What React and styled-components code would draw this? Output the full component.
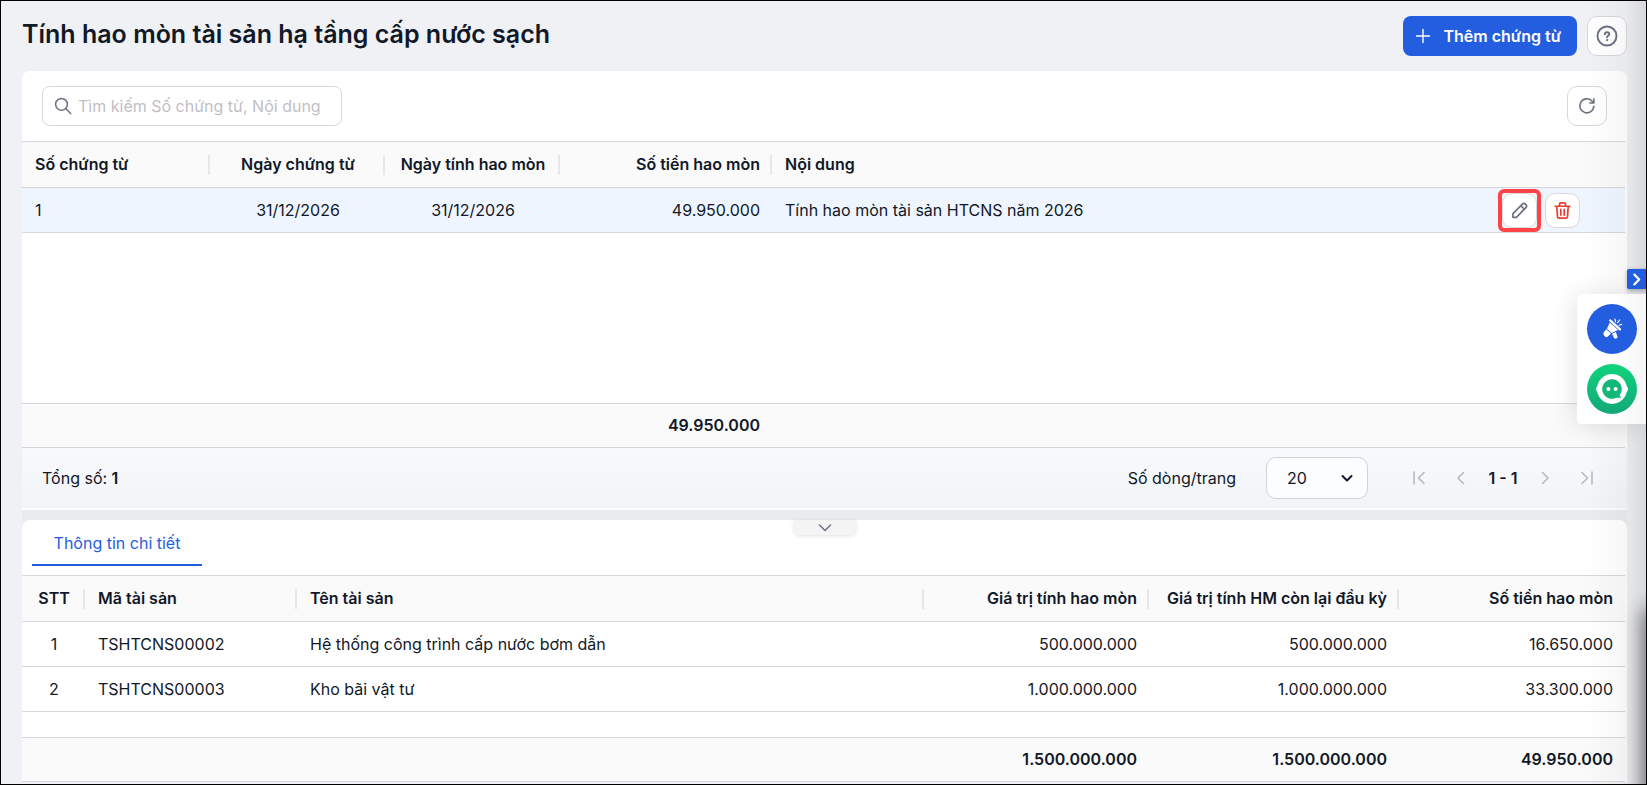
import React from "react";
import styled, { createGlobalStyle } from "styled-components";

const GlobalStyle = createGlobalStyle`
  *, *::before, *::after { box-sizing: border-box; }
  html, body { margin: 0; }
  body, button, input, select {
    font-family: Inter, "Noto Sans", sans-serif;
    font-size: 16px;
    line-height: 24px;
    color: #111827;
  }
`;

const Page = styled.div`
  position: relative;
  min-height: 100vh;
  padding: 15px 19px 2px 21px;
  border: 1px solid #000;
  background: #f0f1f4;
  overflow: hidden;
`;

const EdgeShade = styled.div`
  position: absolute;
  inset: 0 0 0 auto;
  width: 60px;
  background: linear-gradient(to right, rgba(0, 0, 0, 0), rgba(0, 0, 0, 0.03) 66%, rgba(0, 0, 0, 0.1));
  pointer-events: none;
`;

const CornerShade = styled.div`
  position: absolute;
  right: -12px;
  top: 610px;
  bottom: -30px;
  width: 12px;
  box-shadow: 0 0 20px 2px rgba(0, 0, 0, 0.6);
  pointer-events: none;
`;

const Header = styled.header`
  display: flex;
  align-items: center;
  justify-content: space-between;
  margin-bottom: 15px;
`;

const Title = styled.h1`
  margin: 0;
  padding-bottom: 4px;
  font-size: 25px;
  line-height: 32px;
  font-weight: 600;
`;

const Actions = styled.div`
  display: flex;
  gap: 10px;
`;

const PrimaryButton = styled.button`
  display: flex;
  align-items: center;
  gap: 12px;
  height: 40px;
  padding: 0 16px 0 12px;
  border: 0;
  border-radius: 8px;
  background: #245ee0;
  color: #fff;
  font-weight: 600;
`;

const IconButton = styled.button`
  position: relative;
  display: flex;
  align-items: center;
  justify-content: center;
  width: ${(p) => p.$size || 40}px;
  height: ${(p) => p.$size || 40}px;
  padding: 0;
  border: 1px solid #d6d7db;
  border-radius: 10px;
  background: #fff;
  color: ${(p) => p.$color || "#6b7280"};
`;

const MarkedButton = styled(IconButton)`
  &::after {
    content: "";
    position: absolute;
    inset: -5px;
    border: 4px solid #ff4245;
    border-radius: 6px;
  }
`;

const Card = styled.section`
  position: relative;
  border-radius: 8px 8px 0 0;
  background: #fff;
`;

const Toolbar = styled.div`
  display: flex;
  align-items: center;
  justify-content: space-between;
  padding: 15px 20px;
`;

const SearchBox = styled.label`
  display: flex;
  align-items: center;
  gap: 6px;
  width: 300px;
  height: 40px;
  padding: 0 10px 0 11px;
  border: 1px solid #d6d7db;
  border-radius: 8px;
  color: #6b7280;
`;

const SearchInput = styled.input`
  flex: 1;
  min-width: 0;
  padding: 0;
  border: 0;
  outline: 0;
  background: none;
  &::placeholder { color: #bfc0c4; opacity: 1; }
`;

const TableWrap = styled.div`
  padding-right: 2px;
`;

const Table = styled.table`
  width: 100%;
  table-layout: fixed;
  border-collapse: separate;
  border-spacing: 0;
`;

const Col = styled.col`
  width: ${(p) => (p.$width ? `${p.$width}px` : "auto")};
`;

const HeadCell = styled.th`
  height: 47px;
  padding: 0 12px 2px 13px;
  border: solid #d4d6da;
  border-width: 1px 0;
  background: #fafafa ${(p) => (p.$last ? "" : "linear-gradient(#e6e7e9, #e6e7e9) right center / 2px 20px no-repeat")};
  font-weight: 600;
  text-align: ${(p) => p.$align || "left"};
  white-space: nowrap;
`;

const Cell = styled.td`
  height: 45px;
  padding: 0 12px 0 13px;
  border-bottom: 1px solid #d4d6da;
  background: ${(p) => (p.$selected ? "#eff5fe" : "transparent")};
  text-align: ${(p) => p.$align || "left"};
  white-space: nowrap;
`;

const SpacerCell = styled.td`
  height: ${(p) => p.$height}px;
  padding: 0;
`;

const FootCell = styled(Cell)`
  padding-bottom: 2px;
  border-top: 1px solid #d4d6da;
  background: ${(p) => p.$bg || "#fafafa"};
  font-weight: 600;
`;

const CellWithActions = styled.div`
  display: flex;
  align-items: center;
  justify-content: space-between;
  padding-right: 33px;
`;

const RowActions = styled.div`
  display: flex;
  gap: 8px;
`;

const Pagination = styled.div`
  display: flex;
  align-items: center;
  justify-content: space-between;
  height: 62px;
  padding: 0 19px 0 20px;
  border-bottom: 2px solid #fbfcfd;
  background: linear-gradient(#f8f9fb, #f1f5f8);
`;

const Pager = styled.div`
  display: flex;
  align-items: center;
`;

const SelectBox = styled.div`
  display: grid;
  align-items: center;
  margin: 0 30px;
  color: #111827;
  > * { grid-area: 1 / 1; }
  > svg { justify-self: end; margin-right: 13px; pointer-events: none; }
`;

const PageSize = styled.select`
  appearance: none;
  width: 102px;
  height: 42px;
  padding: 0 20px;
  border: 1px solid #d0d3da;
  border-radius: 10px;
  background: #fcfdfe;
`;

const PageButton = styled.button`
  display: flex;
  align-items: center;
  justify-content: center;
  width: 42px;
  height: 40px;
  padding: 0;
  border: 0;
  background: none;
  color: #b4b7be;
`;

const PageRange = styled.strong`
  width: 42px;
  text-align: center;
  font-weight: 600;
  white-space: nowrap;
`;

const Strong = styled.strong`
  font-weight: 600;
`;

const Splitter = styled.div`
  height: 10px;
  background: #e8ecef;
`;

const DetailBackdrop = styled.div`
  background: #e8ecef;
`;

const Collapse = styled.button`
  position: absolute;
  top: 0;
  left: 50%;
  display: flex;
  align-items: center;
  justify-content: center;
  width: 62px;
  height: 15px;
  padding: 0;
  transform: translateX(-50%);
  border: 0;
  border-radius: 0 0 6px 6px;
  background: #f4f4f5;
  box-shadow: 0 1px 4px rgba(0, 0, 0, 0.12);
  color: #6b7280;
`;

const Tabs = styled.div`
  display: flex;
  height: 55px;
  padding: 0 10px 9px;
`;

const Tab = styled.button`
  min-width: 170px;
  padding: 2px 20px 0;
  border: 0;
  border-bottom: 2px solid #245ee0;
  background: none;
  color: #245ee0;
`;

const Drawer = styled.button`
  position: absolute;
  top: 268px;
  right: 0;
  display: flex;
  align-items: center;
  justify-content: center;
  width: 19px;
  height: 20px;
  padding: 0;
  border: 0;
  border-radius: 2px 0 0 2px;
  background: #245ee0;
  color: #fff;
  box-shadow: 0 1px 4px rgba(0, 0, 0, 0.3);
`;

const Dock = styled.aside`
  position: absolute;
  top: 293px;
  right: 0;
  display: flex;
  flex-direction: column;
  gap: 10px;
  padding: 10px 9px 10px 10px;
  border-radius: 8px 0 0 4px;
  background: linear-gradient(to right, #fff 50%, #f6f6f7);
  box-shadow: -2px 2px 24px rgba(0, 0, 0, 0.12);
`;

const DockButton = styled.button`
  display: flex;
  align-items: center;
  justify-content: center;
  width: 50px;
  height: 50px;
  padding: 0;
  border: 0;
  border-radius: 50%;
  background: ${(p) => p.$bg};
  color: #fff;
`;

const Icon = ({ size = 20, stroke = 1.5, children, box = 20 }) => (
  <svg width={size} height={size} viewBox={`0 0 ${box} ${box}`} fill="none" stroke="currentColor"
    strokeWidth={stroke} strokeLinecap="round" strokeLinejoin="round" aria-hidden="true">
    {children}
  </svg>
);

const PlusIcon = () => <Icon size={16} box={16} stroke={1.4}><path d="M8 1.5v13M1.5 8h13" /></Icon>;
const SearchIcon = () => <Icon size={18} box={18}><circle cx="7.5" cy="7.3" r="5.9" /><path d="M11.8 11.6 16.6 16.6" /></Icon>;
const HelpIcon = () => (
  <Icon size={22} box={22} stroke={1.9}>
    <circle cx="11" cy="11" r="9.5" />
    <path d="M8.9 9.3c0-1.2.9-2 2.2-2s2.1.8 2.1 1.9c0 1.6-2.1 1.5-2.1 3.1" />
    <path d="M11.1 15v.1" strokeWidth="2.2" />
  </Icon>
);
const RefreshIcon = () => <Icon size={18} box={18} stroke={1.6}><path d="M15.8 9.2a7 7 0 1 1-1.9-5.2l2 2M15.9 1.9V6h-4.1" /></Icon>;
const PencilIcon = () => (
  <Icon size={17} box={16} stroke={1.6}>
    <path d="M1.8 14.4V10.9L10.7 2a2 2 0 0 1 2.8 0l.5.5a2 2 0 0 1 0 2.8L5.1 14.4zM9.4 3.6l3 3" />
  </Icon>
);
const TrashIcon = () => (
  <Icon size={17} box={16} stroke={1.6}>
    <path d="M1.2 4h13.6M2.6 4l.7 9.9a1.4 1.4 0 0 0 1.4 1.3h6.6a1.4 1.4 0 0 0 1.4-1.3l.7-9.9M5.2 4V2.1A1.2 1.2 0 0 1 6.4.9h3.2a1.2 1.2 0 0 1 1.2 1.2V4M6.4 7v5.3M9.6 7v5.3" />
  </Icon>
);
const ChevronLeft = () => <Icon size={14} box={14}><path d="M9.5 1.5 4 7l5.5 5.5" /></Icon>;
const ChevronRight = () => <Icon size={14} box={14}><path d="M4.5 1.5 10 7l-5.5 5.5" /></Icon>;
const FirstIcon = () => <Icon size={14} box={14}><path d="M2 1v12M12 1.5 6.5 7l5.5 5.5" /></Icon>;
const LastIcon = () => <Icon size={14} box={14}><path d="M12 1v12M2 1.5 7.5 7 2 12.5" /></Icon>;
const SelectArrow = () => <Icon size={16} box={16} stroke={2}><path d="M3.5 6 8 10.5 12.5 6" /></Icon>;
const CollapseIcon = () => <Icon size={14} box={14}><path d="M1.5 4 7 9.5 12.5 4" /></Icon>;
const DrawerIcon = () => <Icon size={13} box={12} stroke={2}><path d="M4 1.5 8.5 6 4 10.5" /></Icon>;
const MegaphoneIcon = () => (
  <svg width="24" height="24" viewBox="0 0 24 24" aria-hidden="true">
    <path d="M10.2 3.4 20 12.4" stroke="currentColor" strokeWidth="2.2" strokeLinecap="round" />
    <path d="M9.8 5.6 18 13 11.6 15.9 6.9 11.7z" fill="currentColor" />
    <path d="M6.2 12.3 11 16.5 7.6 19.7Q6.2 20.7 5 19.5L3.7 18Q2.8 16.7 3.9 15.2z" fill="currentColor" />
    <path d="M12 16.8 15.7 15.1 17.6 19.4Q17.7 21 16.2 21.6 14.7 22 13.9 20.7z" fill="currentColor" />
    <path d="M15.6 4.6 14.9 2.2M17.6 5.7 19.6 3M19.2 8.2 21.6 7.4" stroke="currentColor" strokeWidth="1.2" strokeLinecap="round" />
  </svg>
);
const ChatIcon = () => (
  <svg width="34" height="34" viewBox="0 0 34 34" aria-hidden="true">
    <circle cx="17" cy="17" r="15" fill="#fff" />
    <circle cx="4" cy="17" r="3" fill="#fff" /><circle cx="30" cy="17" r="3" fill="#fff" />
    <path d="M17 7.2a9.8 9.8 0 1 0 4.5 18.5h4.9l-1.900-2.500A9.8 9.8 0 0 0 17 7.200z" fill="#12b877" />
    <circle cx="13.4" cy="17" r="2" fill="#fff" /><circle cx="20.6" cy="17" r="2" fill="#fff" />
  </svg>
);

const DOCUMENT_COLUMNS = [
  { label: "Số chứng từ", width: 188 },
  { label: "Ngày chứng từ", width: 175, align: "center" },
  { label: "Ngày tính hao mòn", width: 175, align: "center" },
  { label: "Số tiền hao mòn", width: 212, align: "right" },
  { label: "Nội dung" },
];

const DETAIL_COLUMNS = [
  { label: "STT", width: 63, align: "center" },
  { label: "Mã tài sản", width: 212 },
  { label: "Tên tài sản" },
  { label: "Giá trị tính hao mòn", width: 225, align: "right" },
  { label: "Giá trị tính HM còn lại đầu kỳ", width: 250, align: "right" },
  { label: "Số tiền hao mòn", width: 226, align: "right" },
];

const DETAIL_ROWS = [
  ["1", "TSHTCNS00002", "Hệ thống công trình cấp nước bơm dẫn", "500.000.000", "500.000.000", "16.650.000"],
  ["2", "TSHTCNS00003", "Kho bãi vật tư", "1.000.000.000", "1.000.000.000", "33.300.000"],
];

const DETAIL_TOTALS = ["", "", "", "1.500.000.000", "1.500.000.000", "49.950.000"];

const TableHead = ({ columns }) => (
  <>
    <colgroup>{columns.map((c) => <Col key={c.label} $width={c.width} />)}</colgroup>
    <thead>
      <tr>
        {columns.map((c, i) => (
          <HeadCell key={c.label} scope="col" $align={c.align} $last={i === columns.length - 1}>{c.label}</HeadCell>
        ))}
      </tr>
    </thead>
  </>
);

const DocumentTable = () => (
  <TableWrap>
    <Table>
      <TableHead columns={DOCUMENT_COLUMNS} />
      <tbody>
        <tr>
          <Cell $selected>1</Cell>
          <Cell $selected $align="center">31/12/2026</Cell>
          <Cell $selected $align="center">31/12/2026</Cell>
          <Cell $selected $align="right">49.950.000</Cell>
          <Cell $selected>
            <CellWithActions>
              Tính hao mòn tài sản HTCNS năm 2026
              <RowActions>
                <MarkedButton $size={35} aria-label="Sửa"><PencilIcon /></MarkedButton>
                <IconButton $size={35} $color="#ee3b2f" aria-label="Xóa"><TrashIcon /></IconButton>
              </RowActions>
            </CellWithActions>
          </Cell>
        </tr>
        <tr><SpacerCell colSpan={5} $height={170} /></tr>
      </tbody>
      <tfoot>
        <tr>
          {["", "", "", "49.950.000", ""].map((v, i) => (
            <FootCell key={i} $align="right" $bg="#f9faf9">{v}</FootCell>
          ))}
        </tr>
      </tfoot>
    </Table>
  </TableWrap>
);

const DetailTable = () => (
  <TableWrap>
    <Table>
      <TableHead columns={DETAIL_COLUMNS} />
      <tbody>
        {DETAIL_ROWS.map((row) => (
          <tr key={row[0]}>
            {row.map((v, i) => <Cell key={i} $align={DETAIL_COLUMNS[i].align}>{v}</Cell>)}
          </tr>
        ))}
        <tr><SpacerCell colSpan={6} $height={25} /></tr>
      </tbody>
      <tfoot>
        <tr>{DETAIL_TOTALS.map((v, i) => <FootCell key={i} $align="right">{v}</FootCell>)}</tr>
      </tfoot>
    </Table>
  </TableWrap>
);

export default function App() {
  return (
    <Page>
      <GlobalStyle />
      <Header>
        <Title>Tính hao mòn tài sản hạ tầng cấp nước sạch</Title>
        <Actions>
          <PrimaryButton><PlusIcon />Thêm chứng từ</PrimaryButton>
          <IconButton aria-label="Trợ giúp"><HelpIcon /></IconButton>
        </Actions>
      </Header>
      <main>
        <Card>
          <Toolbar>
            <SearchBox>
              <SearchIcon />
              <SearchInput type="text" aria-label="Tìm kiếm" placeholder="Tìm kiếm Số chứng từ, Nội dung" />
            </SearchBox>
            <IconButton aria-label="Tải lại"><RefreshIcon /></IconButton>
          </Toolbar>
          <DocumentTable />
          <Pagination>
            <span>Tổng số: <Strong>1</Strong></span>
            <Pager>
              <label htmlFor="page-size">Số dòng/trang</label>
              <SelectBox>
                <PageSize id="page-size" defaultValue="20"><option value="20">20</option></PageSize>
                <SelectArrow />
              </SelectBox>
              <PageButton aria-label="Trang đầu"><FirstIcon /></PageButton>
              <PageButton aria-label="Trang trước"><ChevronLeft /></PageButton>
              <PageRange>1 - 1</PageRange>
              <PageButton aria-label="Trang sau"><ChevronRight /></PageButton>
              <PageButton aria-label="Trang cuối"><LastIcon /></PageButton>
            </Pager>
          </Pagination>
        </Card>
        <Splitter />
        <DetailBackdrop>
          <Card>
            <Collapse aria-label="Thu gọn"><CollapseIcon /></Collapse>
            <Tabs role="tablist"><Tab role="tab" aria-selected="true">Thông tin chi tiết</Tab></Tabs>
            <DetailTable />
          </Card>
        </DetailBackdrop>
      </main>
      <EdgeShade />
      <CornerShade />
      <Drawer aria-label="Mở bảng bên"><DrawerIcon /></Drawer>
      <Dock>
        <DockButton $bg="#245ee0" aria-label="Thông báo"><MegaphoneIcon /></DockButton>
        <DockButton $bg="linear-gradient(#10d37c, #12a877)" aria-label="Trò chuyện"><ChatIcon /></DockButton>
      </Dock>
    </Page>
  );
}
